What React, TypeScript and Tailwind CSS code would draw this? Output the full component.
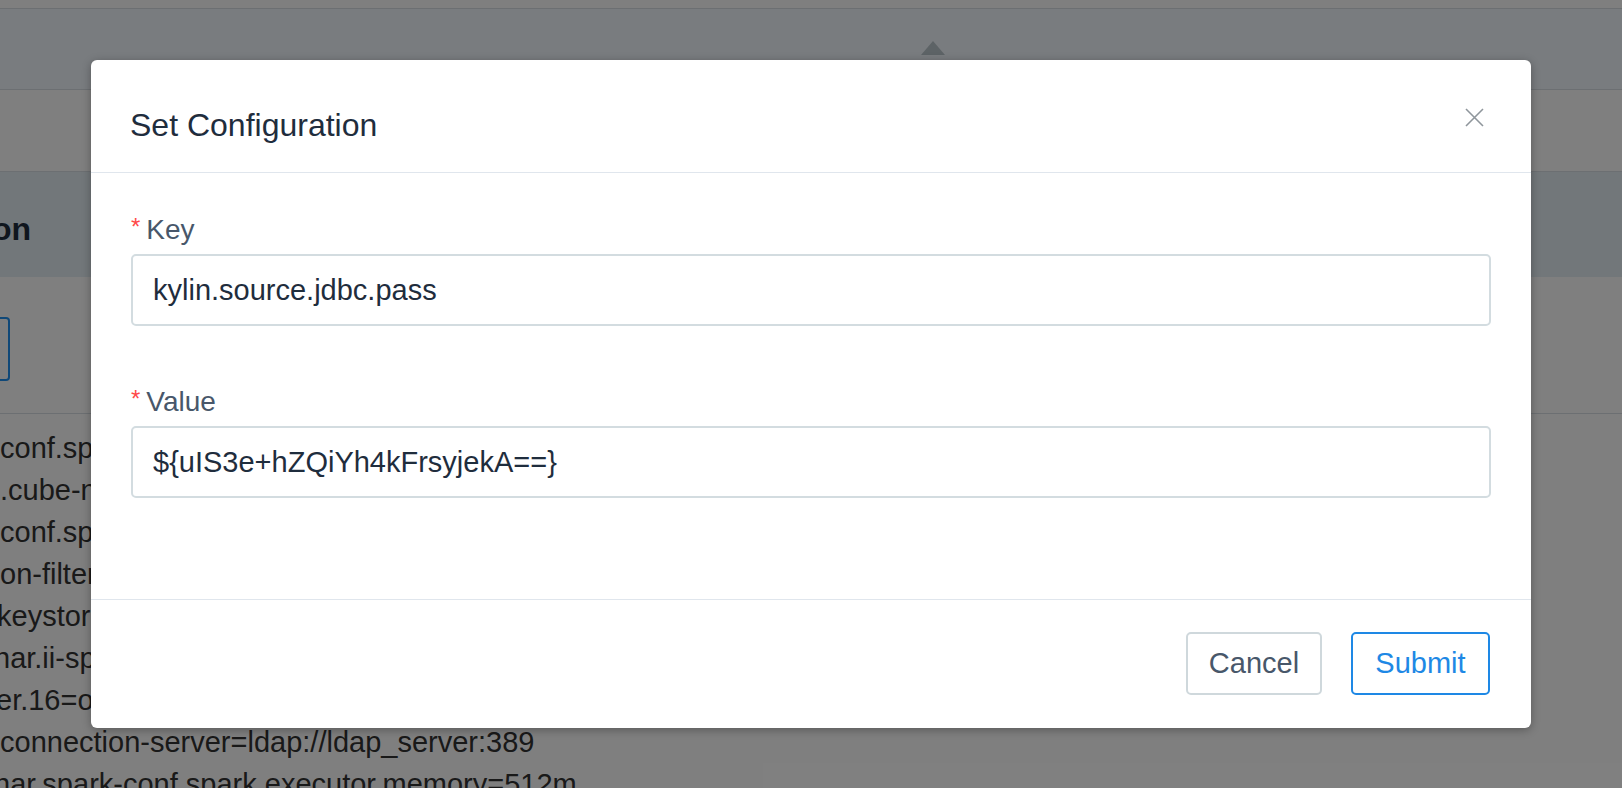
import React from "react";

const font = "font-['Liberation_Sans',Arial,sans-serif]";

const BackgroundPage = () => {
  return (
    <div className="w-full">
      <div className="h-[9px] bg-white border-b border-[#d8dee4]" />
      <div className="h-[81px] bg-[#f2f8fe] border-b border-[#d8dee4] pt-[32px] pl-[921px]">
        <svg width="24" height="14" viewBox="0 0 24 14">
          <polygon points="12,0 24,14 0,14" fill="#bac6cc" />
        </svg>
      </div>
      <div className="h-[82px] bg-white border-b border-[#d8dee4]" />
      <div className="h-[105px] bg-[#e4eef4] flex items-center pt-[8px]">
        <span className="-ml-[8px] text-[32px] font-bold text-[#1f2d3d]">on</span>
      </div>
      <div className="h-[137px] bg-white border-b border-[#d8dee4] pt-[40px]">
        <div className="w-[10px] h-[64px] border-2 border-l-0 border-[#1f90f0] rounded-r-[4px]" />
      </div>
      <div className="bg-white pt-[13px] text-[29px] leading-[42px] text-[#333] whitespace-nowrap">
        <div>conf.spark.executor.instances=1</div>
        <div>.cube-name=kylin_sales_cube</div>
        <div>conf.spark.driver.memory=512m</div>
        <div>on-filter=(objectClass=person)</div>
        <div className="-ml-[3px]">keystore.password=changeit</div>
        <div className="-ml-[6px]">nar.ii-spark-conf.spark.master=yarn</div>
        <div className="-ml-[4px]">er.16=org.apache.kylin.query.udf</div>
        <div>connection-server=ldap://ldap_server:389</div>
        <div className="-ml-[6px]">nar.spark-conf.spark.executor.memory=512m</div>
      </div>
    </div>
  );
};

const Field = ({ label, value, last }: { label: string; value: string; last?: boolean }) => {
  return (
    <div className={last ? "" : "mb-[52px]"}>
      <div className="h-[48px] flex items-center text-[28px] text-[#48576a]">
        <span className="text-[#ff4949] text-[24px] mr-[6px] -mt-[6px]">*</span>
        <span>{label}</span>
      </div>
      <input
        type="text"
        readOnly
        value={value}
        className="w-full h-[72px] border-2 border-[#d3dce0] rounded-[5px] pl-[20px] text-[29px] text-[#1f2d3d] outline-none bg-white"
      />
    </div>
  );
};

const SetConfigModal = () => {
  return (
    <div className="w-[1440px] h-[668px] bg-white rounded-[6px] shadow-[0_2px_10px_rgba(0,0,0,0.3)] flex flex-col">
      <div className="h-[113px] border-b border-[#e0e6ed] pt-[49px] pl-[39px] pr-[47px] flex items-start justify-between">
        <h2 className="text-[32px] leading-[32px] text-[#1f2d3d]">Set Configuration</h2>
        <button className="-mt-[1px]">
          <svg width="19" height="19" viewBox="0 0 19 19">
            <path d="M1 1L18 18M18 1L1 18" stroke="#8f969c" strokeWidth="1.6" />
          </svg>
        </button>
      </div>
      <div className="h-[426px] px-[40px] pt-[33px]">
        <Field label="Key" value="kylin.source.jdbc.pass" />
        <Field label="Value" value="${uIS3e+hZQiYh4kFrsyjekA==}" last />
      </div>
      <div className="flex-1 border-t border-[#e0e6ed] flex justify-end items-start pt-[32px] pr-[41px] gap-[29px]">
        <button className="w-[136px] h-[63px] border-2 border-[#cfd8dc] rounded-[5px] text-[29px] text-[#48576a]">
          Cancel
        </button>
        <button className="w-[139px] h-[63px] border-2 border-[#1e88e5] rounded-[5px] text-[29px] text-[#1e88e5]">
          Submit
        </button>
      </div>
    </div>
  );
};

const App = () => {
  return (
    <div className={`relative w-full h-[788px] overflow-hidden ${font}`}>
      <BackgroundPage />
      <div className="absolute inset-0 bg-black/50 flex justify-center items-start pt-[60px]">
        <SetConfigModal />
      </div>
    </div>
  );
};

export default App;
